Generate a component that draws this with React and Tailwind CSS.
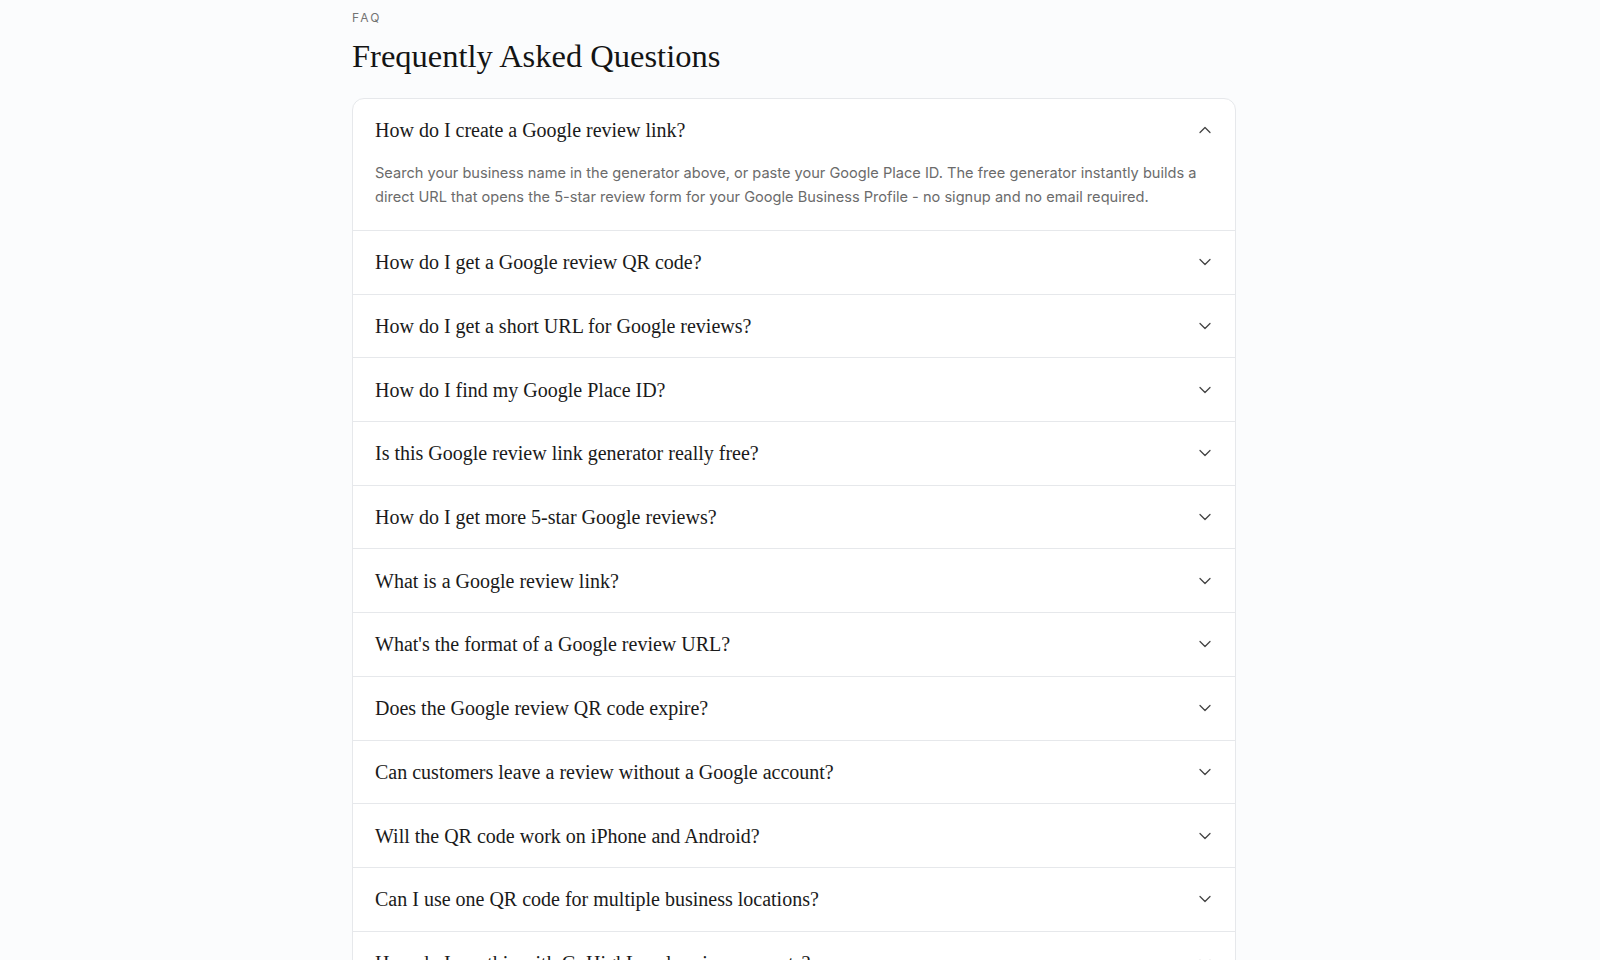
import React from "react";
import { ChevronDown, ChevronUp } from "lucide-react";

const questions = [
  "How do I get a Google review QR code?",
  "How do I get a short URL for Google reviews?",
  "How do I find my Google Place ID?",
  "Is this Google review link generator really free?",
  "How do I get more 5-star Google reviews?",
  "What is a Google review link?",
  "What's the format of a Google review URL?",
  "Does the Google review QR code expire?",
  "Can customers leave a review without a Google account?",
  "Will the QR code work on iPhone and Android?",
  "Can I use one QR code for multiple business locations?",
  "How do I use this with GoHighLevel review requests?",
];

const serif = { fontFamily: '"Liberation Serif", "Times New Roman", serif' };

export default function App() {
  return (
    <div className="min-h-screen bg-[#fbfcfd]">
      <div className="mx-auto w-[896px] pr-[12px] pt-[11px]">
        <div
          className="text-[12px] leading-[14px] tracking-[0.18em] text-[#737373]"
          style={{ fontFamily: "Inter, sans-serif" }}
        >
          FAQ
        </div>
        <h1
          className="mt-[11px] text-[32.5px] leading-[40px] text-[#141414]"
          style={serif}
        >
          Frequently Asked Questions
        </h1>
        <div className="mt-[22px] rounded-t-xl border border-[#e6e8eb] bg-white">
          <div className="border-b border-[#e6e8eb]">
            <div className="flex h-[62px] items-center justify-between pl-[22px] pr-[20px]">
              <span className="text-[20px] text-[#1a1a1a]" style={serif}>
                How do I create a Google review link?
              </span>
              <ChevronUp size={20} strokeWidth={1.5} className="text-[#444]" />
            </div>
            <div
              className="px-[22px] pb-[21px] text-[14.6px] leading-6 text-[#6b6b6b]"
              style={{ fontFamily: "Inter, sans-serif" }}
            >
              Search your business name in the generator above, or paste your
              Google Place ID. The free generator instantly builds a direct URL
              that opens the 5-star review form for your Google Business Profile
              - no signup and no email required.
            </div>
          </div>
          {questions.map((q, i) => (
            <div
              key={q}
              className={
                i < questions.length - 1 ? "border-b border-[#e6e8eb]" : ""
              }
            >
              <div className="flex h-[62.7px] items-center justify-between pl-[22px] pr-[20px]">
                <span className="text-[20px] text-[#1a1a1a]" style={serif}>
                  {q}
                </span>
                <ChevronDown
                  size={20}
                  strokeWidth={1.5}
                  className="text-[#444]"
                />
              </div>
            </div>
          ))}
        </div>
      </div>
    </div>
  );
}
